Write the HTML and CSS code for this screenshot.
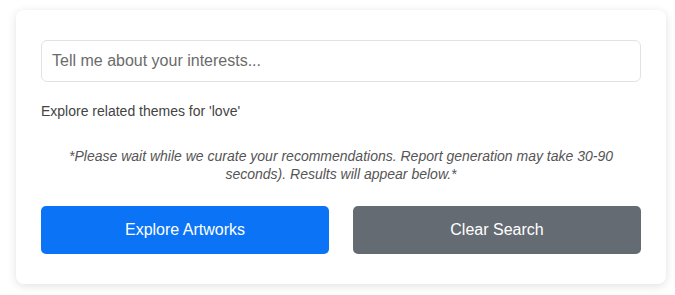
FILE: index.html
```html
<!DOCTYPE html>
<html lang="en">
<head>
    <meta charset="UTF-8">
    <meta name="viewport" content="width=device-width, initial-scale=1.0">
    <title>Explore Artworks</title>
    <link rel="stylesheet" href="styles.css">
</head>
<body>
    <div class="search-card">
        <input type="text" class="search-input" placeholder="Tell me about your interests...">
        <p class="related-themes">Explore related themes for 'love'</p>
        <p class="wait-note">*Please wait while we curate your recommendations. Report generation may take 30-90 seconds). Results will appear below.*</p>
        <div class="actions">
            <button class="btn btn-primary">Explore Artworks</button>
            <button class="btn btn-secondary">Clear Search</button>
        </div>
    </div>
</body>
</html>
```

FILE: styles.css
```css
* {
    margin: 0;
    padding: 0;
    box-sizing: border-box;
}
body {
    font-family: 'Liberation Sans', Arial, sans-serif;
    background-color: #fff;
    padding: 10px 9px 11px 16px;
}
.search-card {
    width: 650px;
    height: 274px;
    background-color: #fff;
    border-radius: 8px;
    padding: 30px 25px;
    box-shadow: 0 2px 10px rgba(0, 0, 0, 0.12);
}
.search-input {
    display: block;
    width: 100%;
    height: 42px;
    padding: 0 10px;
    border: 1px solid #e2e2e2;
    border-radius: 6px;
    font-family: inherit;
    font-size: 16px;
    color: #333;
    outline: none;
}
.search-input::placeholder {
    color: #6b6b6b;
}
.related-themes {
    margin-top: 21px;
    font-size: 14px;
    line-height: 16px;
    color: #444;
}
.wait-note {
    margin-top: 28px;
    padding: 0 20px;
    font-size: 14px;
    line-height: 18px;
    font-style: italic;
    color: #555;
    text-align: center;
}
.actions {
    display: flex;
    gap: 24px;
    margin-top: 23px;
}
.btn {
    flex: 1;
    height: 48px;
    border: none;
    border-radius: 5px;
    font-family: inherit;
    font-size: 16px;
    color: #fff;
    cursor: pointer;
}
.btn-primary {
    background-color: #0a73f6;
}
.btn-secondary {
    background-color: #646b72;
}
```
